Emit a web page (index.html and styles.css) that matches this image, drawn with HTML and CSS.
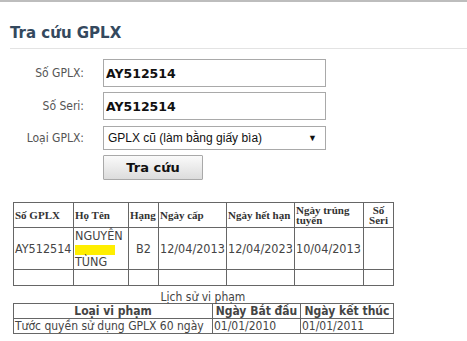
FILE: index.html
```html
<!DOCTYPE html>
<html lang="vi">
<head>
    <meta charset="UTF-8">
    <title>Tra cứu GPLX</title>
    <link rel="stylesheet" href="styles.css">
</head>
<body>
    <div class="page">
        <h1 class="title">Tra cứu GPLX</h1>

        <form class="search-form">
            <label class="field-label">Số GPLX:</label>
            <input class="field-input" type="text" value="AY512514">
            <label class="field-label">Số Seri:</label>
            <input class="field-input" type="text" value="AY512514">
            <label class="field-label">Loại GPLX:</label>
            <div class="field-select">
                <span>GPLX cũ (làm bằng giấy bìa)</span>
                <span class="select-arrow">&#9660;</span>
            </div>
            <span></span>
            <button type="button" class="search-button">Tra cứu</button>
        </form>

        <table class="result-table">
            <colgroup>
                <col class="c1"><col class="c2"><col class="c3"><col class="c4">
                <col class="c5"><col class="c6"><col class="c7">
            </colgroup>
            <tr class="head-row">
                <th>Số GPLX</th>
                <th>Họ Tên</th>
                <th>Hạng</th>
                <th>Ngày cấp</th>
                <th>Ngày hết hạn</th>
                <th>Ngày trúng tuyển</th>
                <th class="center">Số Seri</th>
            </tr>
            <tr class="data-row">
                <td>AY512514</td>
                <td>NGUYỄN<br><span class="redacted"></span><br>TÙNG</td>
                <td class="center">B2</td>
                <td>12/04/2013</td>
                <td>12/04/2023</td>
                <td>10/04/2013</td>
                <td></td>
            </tr>
            <tr class="empty-row">
                <td></td><td></td><td></td><td></td><td></td><td></td><td></td>
            </tr>
        </table>

        <div class="history">
            <div class="history-caption">Lịch sử vi phạm</div>
            <table class="history-table">
                <colgroup>
                    <col class="h1"><col class="h2"><col class="h3">
                </colgroup>
                <tr>
                    <th>Loại vi phạm</th>
                    <th>Ngày Bắt đầu</th>
                    <th>Ngày kết thúc</th>
                </tr>
                <tr>
                    <td>Tước quyền sử dụng GPLX 60 ngày</td>
                    <td>01/01/2010</td>
                    <td>01/01/2011</td>
                </tr>
            </table>
        </div>
    </div>
</body>
</html>
```

FILE: styles.css
```css
body {
    margin: 0;
    padding: 0;
    background-color: #fff;
    font-family: "DejaVu Sans Condensed", "DejaVu Sans", sans-serif;
    color: #333;
}
.page {
    border-top: 2px solid #bdbdbd;
    width: 467px;
}
.title {
    margin: 22px 0 0 10px;
    padding-bottom: 6px;
    font-family: "DejaVu Sans", Verdana, sans-serif;
    font-size: 15px;
    font-weight: bold;
    color: #34495e;
    border-bottom: 1px solid #e3e3e3;
}
.search-form {
    display: grid;
    grid-template-columns: 84px 223px;
    column-gap: 19px;
    row-gap: 5px;
    align-items: center;
    margin-top: 10px;
}
.field-label {
    text-align: right;
    font-size: 12px;
    color: #555;
}
.field-input {
    box-sizing: border-box;
    width: 223px;
    height: 28px;
    margin: 0;
    padding: 0 2px;
    border: 1px solid #a9a9a9;
    font-family: "DejaVu Sans", Verdana, sans-serif;
    font-size: 12.5px;
    font-weight: bold;
    color: #111;
}
.field-select {
    box-sizing: border-box;
    width: 223px;
    height: 24px;
    margin-top: 1px;
    padding: 0 8px 0 4px;
    border: 1px solid #a9a9a9;
    display: flex;
    align-items: center;
    justify-content: space-between;
    font-family: "Liberation Sans", Arial, sans-serif;
    font-size: 12px;
    color: #111;
}
.select-arrow {
    font-size: 9px;
}
.search-button {
    box-sizing: border-box;
    width: 100px;
    height: 25px;
    border: 1px solid #a9a9a9;
    border-radius: 1px;
    background: linear-gradient(#fafafa, #dcdcdc);
    font-family: "DejaVu Sans", Verdana, sans-serif;
    font-size: 13px;
    font-weight: bold;
    color: #111;
}
.result-table {
    margin: 22px 0 0 13px;
    border-collapse: collapse;
    table-layout: fixed;
    width: 380px;
    border: 1px solid #666;
}
.result-table th,
.result-table td {
    border: 1px solid #666;
    padding: 1px 1px;
    vertical-align: middle;
    overflow: visible;
}
.result-table th {
    font-family: "Liberation Serif", "Times New Roman", serif;
    font-size: 11px;
    font-weight: bold;
    color: #333;
    text-align: left;
    line-height: 10px;
}
.result-table td {
    font-size: 12.5px;
    color: #444;
    line-height: 13px;
}
.head-row {
    height: 25px;
}
.data-row {
    height: 42px;
}
.empty-row {
    height: 16px;
}
.center {
    text-align: center !important;
}
.c1 { width: 60px; }
.c2 { width: 55px; }
.c3 { width: 30px; }
.c4 { width: 68px; }
.c5 { width: 68px; }
.c6 { width: 69px; }
.c7 { width: 30px; }
.redacted {
    display: inline-block;
    width: 40px;
    height: 10px;
    background-color: #ffee00;
    vertical-align: middle;
}
.history {
    width: 380px;
    margin: 5px 0 0 13px;
}
.history-caption {
    text-align: center;
    font-size: 12px;
    color: #444;
    line-height: 12px;
}
.history-table {
    width: 380px;
    border-collapse: collapse;
    table-layout: fixed;
    border: 1px solid #666;
}
.history-table th,
.history-table td {
    border: 1px solid #666;
    padding: 0 1px;
    font-size: 12px;
    line-height: 14px;
    height: 14px;
    color: #444;
    white-space: nowrap;
}
.history-table th {
    font-weight: bold;
    text-align: center;
}
.h1 { width: 199px; }
.h2 { width: 88px; }
.h3 { width: 93px; }
```
